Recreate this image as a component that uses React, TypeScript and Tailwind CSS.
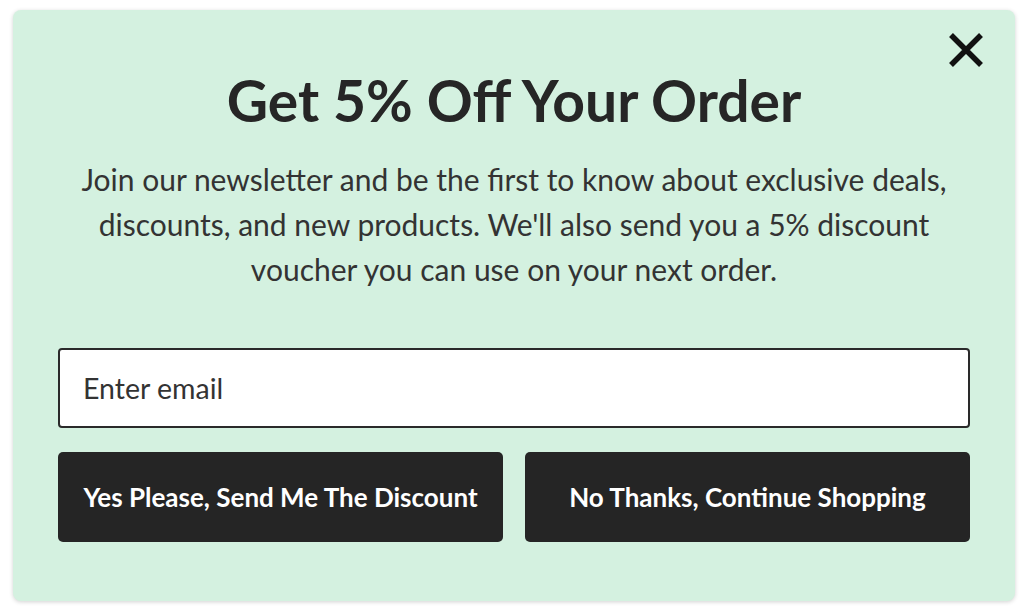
import React, { useState } from "react";

const App: React.FC = () => {
  const [email, setEmail] = useState("");

  return (
    <div className="w-[1024px] h-[612px] bg-white pt-[10px] pl-[13px] font-['Lato',sans-serif]">
      <div className="relative w-[1002px] h-[591px] bg-[#d4f1e0] rounded-[8px] shadow-[0_1px_4px_rgba(0,0,0,0.18)] px-[45px] pt-[60px]">
        {/* Close */}
        <button className="absolute top-[20px] right-[29px] w-[40px] h-[40px] flex items-center justify-center">
          <svg width="38" height="38" viewBox="0 0 38 38">
            <path d="M4 4 L34 34 M34 4 L4 34" stroke="#111" strokeWidth="5.5" strokeLinecap="butt" />
          </svg>
        </button>

        <h2 className="text-center text-[57px] leading-[60px] font-bold text-[#262626]">
          Get 5% Off Your Order
        </h2>

        <p className="mt-[27px] text-center text-[30px] leading-[45px] text-[#333333]">
          Join our newsletter and be the first to know about exclusive deals,
          <br />
          discounts, and new products. We'll also send you a 5% discount
          <br />
          voucher you can use on your next order.
        </p>

        <input
          type="email"
          value={email}
          onChange={(e) => setEmail(e.target.value)}
          placeholder="Enter email"
          className="mt-[56px] block w-full h-[80px] bg-white border-2 border-[#2a2a2a] rounded-[4px] px-[23px] text-[28.5px] text-[#333] placeholder:text-[#333] focus:outline-none"
        />

        <div className="mt-[24px] flex gap-[22px]">
          <button className="flex-1 h-[90px] bg-[#252525] rounded-[5px] text-white text-[26px] font-bold">
            Yes Please, Send Me The Discount
          </button>
          <button className="flex-1 h-[90px] bg-[#252525] rounded-[5px] text-white text-[26px] font-bold">
            No Thanks, Continue Shopping
          </button>
        </div>
      </div>
    </div>
  );
};

export default App;
